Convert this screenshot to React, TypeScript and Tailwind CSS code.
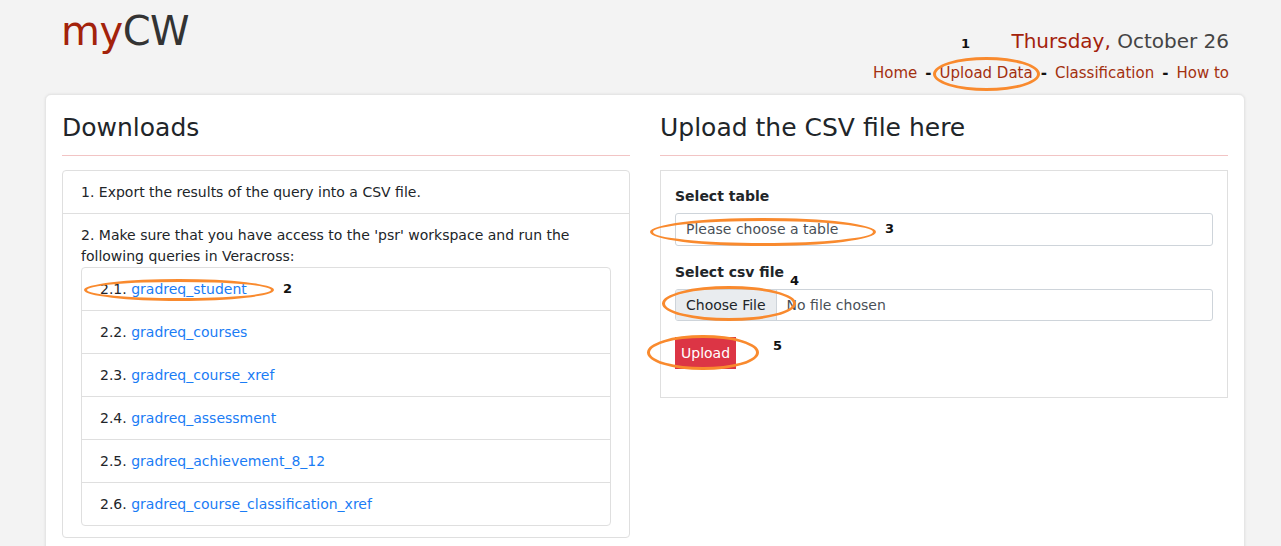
import React from "react";

const queries = [
  "gradreq_student",
  "gradreq_courses",
  "gradreq_course_xref",
  "gradreq_assessment",
  "gradreq_achievement_8_12",
  "gradreq_course_classification_xref",
];

const navLinks = ["Home", "Upload Data", "Classification", "How to"];

// orange hand-drawn marks laid over the page
const rings = [
  { left: 933, top: 57, w: 107, h: 34 },
  { left: 84, top: 279, w: 190, h: 22 },
  { left: 650, top: 218, w: 226, h: 28 },
  { left: 662, top: 286, w: 134, h: 35 },
  { left: 647, top: 335, w: 112, h: 35 },
];

const marks = [
  { n: "1", x: 961, y: 36 },
  { n: "2", x: 283, y: 281 },
  { n: "3", x: 885, y: 221 },
  { n: "4", x: 790, y: 273 },
  { n: "5", x: 773, y: 338 },
];

const Annotations = () => (
  <div className="pointer-events-none absolute inset-0">
    {rings.map((r, i) => (
      <div
        key={i}
        className="absolute rounded-[50%] border-[3px] border-[#f98a2e]"
        style={{ left: r.left, top: r.top, width: r.w, height: r.h }}
      />
    ))}
    {marks.map(m => (
      <span
        key={m.n}
        className="absolute text-[13px] leading-4 font-bold text-[#111]"
        style={{ left: m.x, top: m.y }}
      >
        {m.n}
      </span>
    ))}
  </div>
);

const Header = () => (
  <div className="mx-[45px] w-[1200px] flex justify-between px-4">
    <div className="pt-[7px] text-[40px] leading-[48px] tracking-[-0.5px]">
      <span className="text-[#a3220b]">my</span>
      <span className="text-[#333]">CW</span>
    </div>
    <div className="flex flex-col items-end pt-[29px]">
      <div className="text-[20px] leading-6">
        <span className="text-[#a3220b]">Thursday,</span>{" "}
        <span className="text-[#444]">October 26</span>
      </div>
      <nav className="mt-[10px] flex items-center text-[15px] leading-5">
        {navLinks.map((l, i) => (
          <React.Fragment key={l}>
            {i > 0 && <span className="mx-[8px] text-[#111] font-bold">-</span>}
            <a className="text-[#a3300f]">{l}</a>
          </React.Fragment>
        ))}
      </nav>
    </div>
  </div>
);

const Downloads = () => (
  <div>
    <h2 className="text-[25px] leading-[30px] text-[#212529] pt-[18px] pb-[12px]">Downloads</h2>
    <div className="border-t border-[#f2c4c4] mb-[14px]" />
    <div className="border border-[#dfdfdf] rounded-[4px] text-[14px] text-[#212529]">
      <div className="px-[18px] py-3 leading-[18px]">1. Export the results of the query into a CSV file.</div>
      <div className="border-t border-[#dfdfdf] px-[18px] pt-[11px] pb-[11px]">
        <p className="leading-[21px]">
          2. Make sure that you have access to the 'psr' workspace and run the following queries in Veracross:
        </p>
        <div className="border border-[#dfdfdf] rounded-[4px]">
          {queries.map((q, i) => (
            <div
              key={q}
              className={`px-[18px] py-3 leading-[18px] ${i > 0 ? "border-t border-[#dfdfdf]" : ""}`}
            >
              2.{i + 1}. <a className="text-[#1a7cf5]">{q}</a>
            </div>
          ))}
        </div>
      </div>
    </div>
  </div>
);

const UploadForm = () => (
  <div>
    <h2 className="text-[25px] leading-[30px] text-[#212529] pt-[18px] pb-[12px]">Upload the CSV file here</h2>
    <div className="border-t border-[#f2c4c4] mb-[14px]" />
    <div className="border border-[#dfdfdf] px-[14px] pt-[16px] pb-[28px] text-[14px] text-[#212529]">
      <div className="font-bold leading-[18px]">Select table</div>
      <div className="mt-[8px] h-[33px] border border-[#ced4da] rounded-[3px] flex items-center px-[10px] text-[#495057]">
        Please choose a table
      </div>
      <div className="mt-[17px] font-bold leading-[18px]">Select csv file</div>
      <div className="mt-[8px] h-[32px] border border-[#ced4da] rounded-[3px] flex items-center overflow-hidden">
        <div className="h-full flex items-center px-[10px] bg-[#e9ecef] border-r border-[#ced4da] text-[#212529]">
          Choose File
        </div>
        <span className="ml-[10px] text-[#495057]">No file chosen</span>
      </div>
      <button className="mt-[16px] h-[32px] px-[6px] bg-[#dc3545] text-white text-[14px] leading-5">
        Upload
      </button>
    </div>
  </div>
);

export default function App() {
  return (
    <div
      className="relative min-h-screen bg-[#f3f3f3] overflow-hidden"
      style={{ fontFamily: '"DejaVu Sans", Verdana, sans-serif' }}
    >
      <Header />
      <div className="mx-[45px] mt-[11px] w-[1200px] bg-white border border-[#e6e6e6] rounded-[6px] shadow-[0_0_3px_rgba(0,0,0,0.08)] px-[16px] pb-4">
        <div className="grid grid-cols-2 gap-[30px]">
          <Downloads />
          <UploadForm />
        </div>
      </div>
      <Annotations />
    </div>
  );
}
